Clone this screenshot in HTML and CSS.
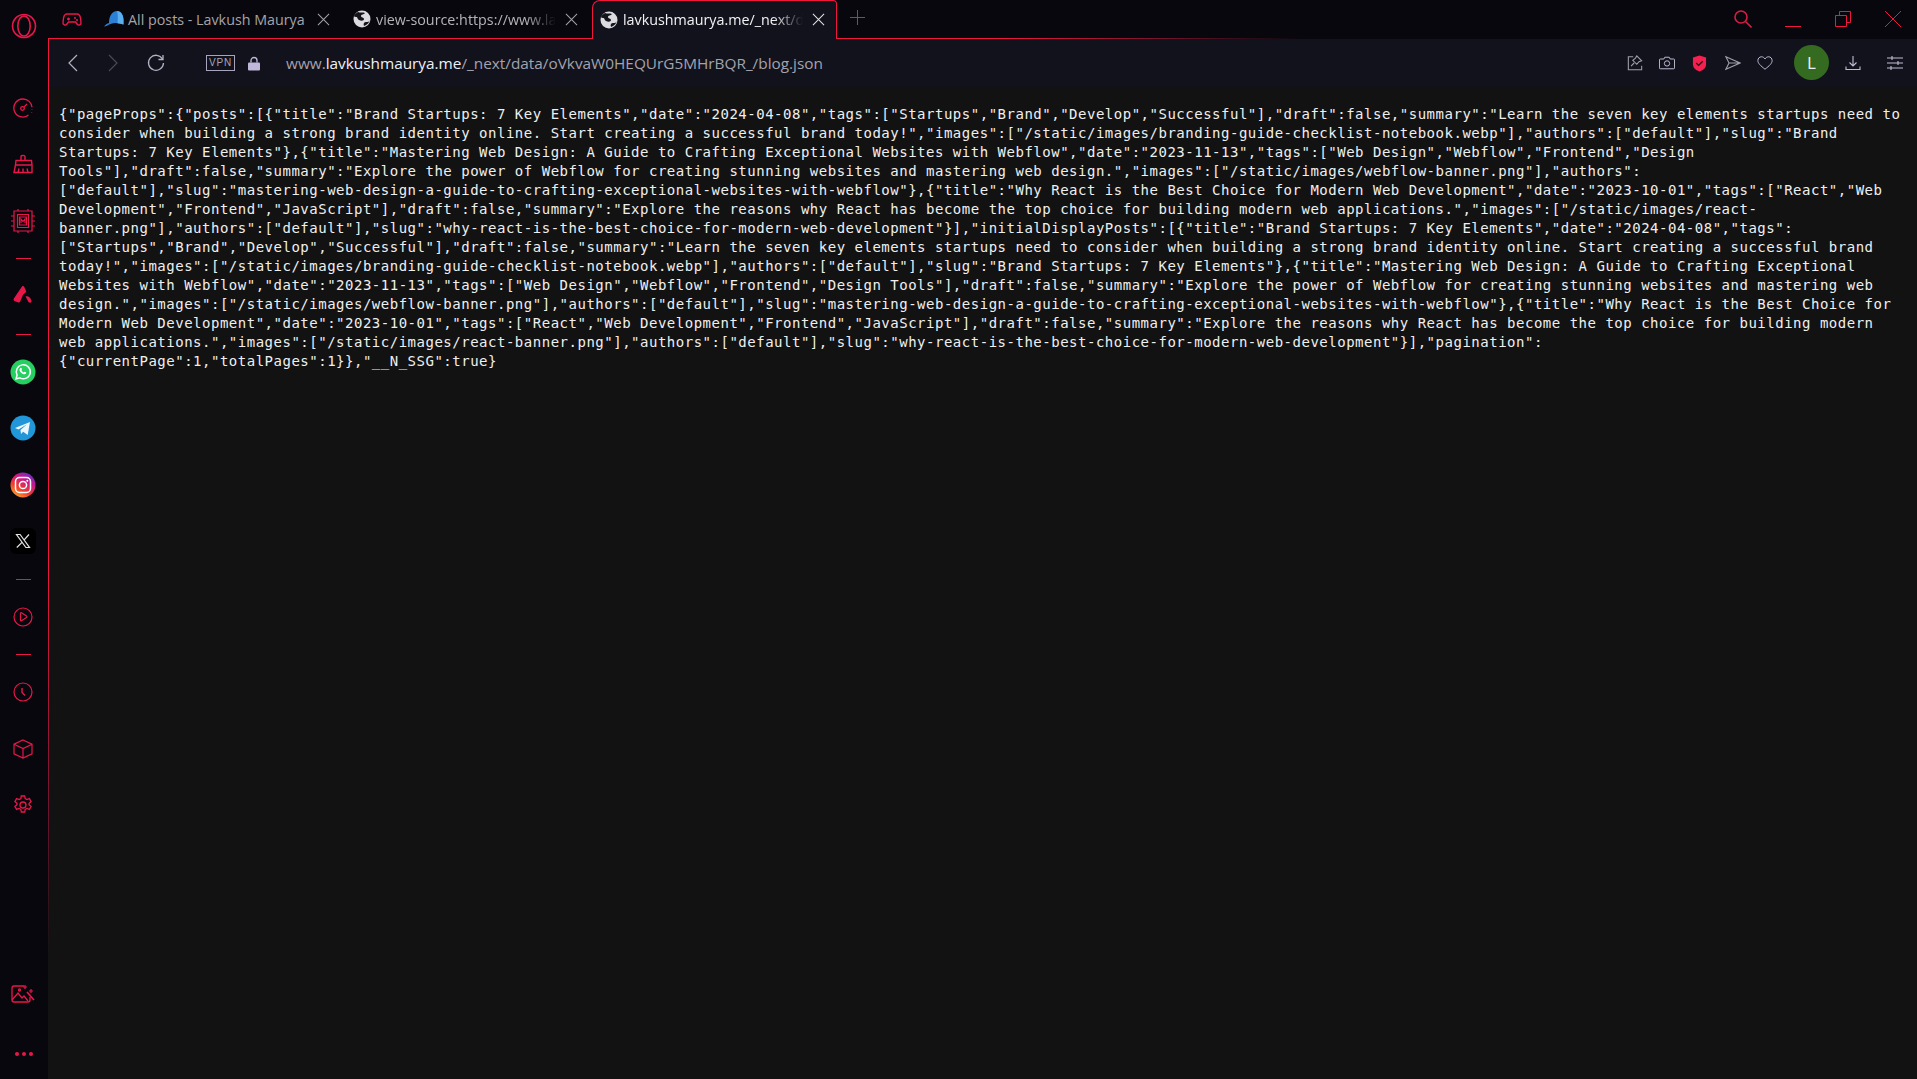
FILE: index.html
```html
<!DOCTYPE html>
<html lang="en">
<head>
<meta charset="utf-8">
<title>lavkushmaurya.me/_next/data</title>
<link rel="stylesheet" href="styles.css">
</head>
<body>
<div class="app">
  <aside class="sidebar">
    <div class="logo-slot">
      <svg class="ic-logo" viewBox="0 0 26 26" fill="none" stroke="currentColor" stroke-width="1.6"><circle cx="13" cy="13" r="11.5"/><ellipse cx="13" cy="13" rx="6.2" ry="10"/></svg>
    </div>
    <div class="side-items">
      <div class="slot"><svg class="ic" viewBox="0 0 20 20" fill="none" stroke="currentColor" stroke-width="1.3"><path d="M15.5 17A9 9 0 1 1 10 1c4.7 0 8.6 3.6 9 8.2"/><path d="M19 11.5v.5M18.6 14v.5"/><circle cx="9.5" cy="10.5" r="1.8"/><path d="M11 9l3-3"/></svg></div>
      <div class="slot"><svg class="ic" viewBox="0 0 20 20" fill="none" stroke="currentColor" stroke-width="1.4"><path d="M8 6V2.500c0-1.500 4-1.500 4 0V6M3 6.500h15.500l.5 4.500v7.500H1l1.500-7.500zM3 11h16M5 18.500l1-4M10 18.500v-4M15 18.500l-1-4"/></svg></div>
      <div class="slot"><svg class="ic ic-lg" viewBox="0 0 24 24" fill="none" stroke="currentColor" stroke-width="1.2"><path d="M3 2h18v20H3zM6.500 5.500h11v13h-11zM8.500 8h7v8h-7z"/><path d="M7 0v2M17 0v2M7 22v2M17 22v2M0 7h3M0 12h3M0 17h3M21 7h3M21 12h3M21 17h3"/><path d="M10 14v-4l2 2.500 2-2.500v4"/></svg></div>
      <div class="rule"></div>
      <div class="slot"><svg class="ic" viewBox="0 0 20 20" fill="currentColor"><path d="M9 .5c1-.7 1.800-.4 2.300.6l2 4.700-3.300 3-2.800 6.600c-.5 1-1.500 1.300-2.400.9L1.500 15c-.9-.5-1.200-1.400-.8-2.300z"/><path d="M12.500 10.500c2-1 4.500 0 5.800 3.500.4 1 .2 2-.5 2.500-.8.500-1.700.2-2.300-.4z"/></svg></div>
      <div class="rule"></div>
      <div class="slot"><svg class="ic-app" viewBox="0 0 26 26"><circle cx="13" cy="13" r="12.500" fill="#25cf60"/><path d="M6 20l1.100-4a7 7 0 1 1 2.800 2.900z" fill="none" stroke="#fff" stroke-width="1.500"/><path d="M10 9.500c.8-1 1.400-.8 1.700 0 .3.900.2 1-.3 1.700.5 1 1.200 1.700 2.300 2.200.7-.8 1-.8 1.800-.3 1 .5 1 1 .3 1.700-1 .9-3 .4-4.500-.9-1.500-1.300-2.500-3.200-1.300-4.400z" fill="#fff"/></svg></div>
      <div class="slot"><svg class="ic-app" viewBox="0 0 26 26"><circle cx="13" cy="13" r="12.500" fill="#2196d8"/><path d="M5 13l15-6-2.300 13-4.500-3.200-2.200 2.100-.5-3.800 6.500-5.800-8.500 5.200z" fill="#eef6fb"/></svg></div>
      <div class="slot"><svg class="ic-app" viewBox="0 0 26 26"><defs><linearGradient id="ig" x1="0.15" y1="1" x2="0.8" y2="0"><stop offset="0" stop-color="#fdb42c"/><stop offset="0.35" stop-color="#f0402c"/><stop offset="0.7" stop-color="#c6188f"/><stop offset="1" stop-color="#5a35c8"/></linearGradient></defs><circle cx="13" cy="13" r="12.500" fill="url(#ig)"/><rect x="5.500" y="5.500" width="15" height="15" rx="4" fill="none" stroke="#fff" stroke-width="1.500"/><circle cx="13" cy="13" r="3.600" fill="none" stroke="#fff" stroke-width="1.500"/><circle cx="17.300" cy="8.700" r="1" fill="#fff"/></svg></div>
      <div class="slot"><svg class="ic-app" viewBox="0 0 26 26"><rect width="26" height="26" rx="6" fill="#000"/><path d="M6.500 6.500h3.600l9.400 13h-3.600zM19 6.500l-5.300 5.900M12 14.300l-5.200 5.200" fill="none" stroke="#e6e6e6" stroke-width="1.200"/></svg></div>
      <div class="rule"></div>
      <div class="slot"><svg class="ic" viewBox="0 0 20 20" fill="none" stroke="currentColor" stroke-width="1.2"><circle cx="10" cy="10" r="9"/><path d="M7.500 6.300c0-.6.400-.8 1-.5l5 3.300c.6.400.6 1 0 1.400l-5 3.200c-.6.400-1 .1-1-.5z"/></svg></div>
      <div class="rule"></div>
      <div class="slot"><svg class="ic" viewBox="0 0 20 20" fill="none" stroke="currentColor" stroke-width="1.2"><circle cx="10" cy="10" r="9"/><path d="M9 6v4.500l3 3" stroke-width="1.400"/></svg></div>
      <div class="slot"><svg class="ic" viewBox="0 0 20 20" fill="none" stroke="currentColor" stroke-width="1.2"><path d="M10 1l9 4.200v9.600L10 19l-9-4.200V5.200zM1 5.200L10 9.500l9-4.300M10 9.500V19"/></svg></div>
      <div class="slot"><svg class="ic" viewBox="0 0 20 20" fill="none" stroke="currentColor" stroke-width="1.3"><circle cx="10" cy="10" r="3"/><path d="M8.300 1h3.400l.5 2.600 1.700.9 2.500-.9 1.700 3-2 1.700v1.400l2 1.700-1.700 3-2.500-.9-1.700.9-.5 2.600H8.300l-.5-2.600-1.700-.9-2.500.9-1.700-3 2-1.700V8.300l-2-1.700 1.700-3 2.500.9 1.700-.9z"/></svg></div>
    </div>
    <div class="side-bottom">
      <div class="slot"><svg class="ic-pic" viewBox="0 0 24 20" fill="none" stroke="currentColor" stroke-width="1.3"><path d="M13 2H3a2 2 0 0 0-2 2v12a2 2 0 0 0 2 2h14a2 2 0 0 0 2-2v-3"/><path d="M1 16l6-7 4 5 2-2 4 5"/><circle cx="8.500" cy="6" r="1"/><path d="M16 8l7 8" stroke-width="1.600"/><path d="M14 1v4M12 3h4M20 5v4M18 7h4" stroke-width="1.200"/></svg></div>
      <div class="dots"><i></i><i></i><i></i></div>
    </div>
  </aside>
  <div class="main">
    <header class="tabstrip">
      <svg class="ic-game" viewBox="0 0 20 16" fill="none" stroke="currentColor" stroke-width="1.4"><path d="M5 2h10c2 0 3 1.500 3.500 4l.5 4.500c.2 2.500-2.500 3.500-4 1.500l-1.500-2H6.500L5 12c-1.500 2-4.200 1-4-1.500L1.500 6C2 3.500 3 2 5 2z"/><path d="M5 7h3M6.500 5.500v3"/><circle cx="13" cy="6" r=".4"/><circle cx="15" cy="8" r=".4"/></svg>
      <div class="tab tab-first">
        <svg class="fav" viewBox="0 0 20 18"><path d="M0 16.500c1.500-2 3-3 5-3.500C5 6 8 1 13 1c4 0 6.500 4 6.500 9v4.500c-4.500-1.500-9-2-13-.5-2.500 1-4.500 2.500-6.500 2.500z" fill="#2b7fd4"/><path d="M13 1c4 0 6.500 4 6.500 9v4.500c-2-.6-4-1-6-1.200C14 8 14 4 13 1z" fill="#5ab0ef"/></svg>
        <span class="tab-title">All posts - Lavkush Maurya</span>
        <svg class="close" viewBox="0 0 14 14"><path d="M1 1l12 12M13 1L1 13"/></svg>
      </div>
      <div class="tab tab-second">
        <svg class="fav fav-globe" viewBox="0 0 18 18"><circle cx="9" cy="9" r="8.500" fill="#dcdce0"/><path d="M5 2c2 1 5 0 7 1-1 2-4 1-4 3s3 1 3 3-3 2-5 1-1-3-3-3-2-1-2-1c0-1 2-3 4-4zM17 10c-1 2-2 2-4 2s-3 2-2 4c3-1 5-3 6-6z" fill="#14141c"/></svg>
        <span class="tab-title tab-fade">view-source:https://www.la</span>
        <svg class="close" viewBox="0 0 14 14"><path d="M1 1l12 12M13 1L1 13"/></svg>
      </div>
      <div class="tab tab-active">
        <svg class="fav fav-globe" viewBox="0 0 18 18"><circle cx="9" cy="9" r="8.500" fill="#dcdce0"/><path d="M5 2c2 1 5 0 7 1-1 2-4 1-4 3s3 1 3 3-3 2-5 1-1-3-3-3-2-1-2-1c0-1 2-3 4-4zM17 10c-1 2-2 2-4 2s-3 2-2 4c3-1 5-3 6-6z" fill="#14141c"/></svg>
        <span class="tab-title tab-fade tab-title-active">lavkushmaurya.me/_next/da</span>
        <svg class="close close-active" viewBox="0 0 14 14"><path d="M1 1l12 12M13 1L1 13"/></svg>
      </div>
      <svg class="plus" viewBox="0 0 15 15"><path d="M7.500 0v15M0 7.500h15"/></svg>
      <div class="winbtns">
        <svg class="win win-search" viewBox="0 0 18 18" fill="none" stroke="currentColor" stroke-width="1.600"><circle cx="7" cy="7" r="6"/><path d="M11.500 11.500l6 6"/></svg>
        <svg class="win win-min" viewBox="0 0 16 16" fill="none" stroke="currentColor" stroke-width="1"><path d="M0 15.500h16"/></svg>
        <svg class="win win-max" viewBox="0 0 16 16" fill="none" stroke="currentColor" stroke-width="1"><path d="M.5 4.500h11v11H.5zM4.500 4.500v-4h11v11h-4"/></svg>
        <svg class="win win-close" viewBox="0 0 16 16" fill="none" stroke="currentColor" stroke-width="1"><path d="M0 0l16 16M16 0L0 16"/></svg>
      </div>
    </header>
    <div class="content">
      <nav class="toolbar">
        <svg class="nav-ic nav-back" viewBox="0 0 12 18"><path d="M10 1L2 9l8 8"/></svg>
        <svg class="nav-ic nav-fwd" viewBox="0 0 12 18"><path d="M2 1l8 8-8 8"/></svg>
        <svg class="nav-ic nav-reload" viewBox="0 0 18 18"><path d="M15.500 5A7.500 7.500 0 1 0 16.500 9"/><path d="M16 1v4.500h-4.500"/></svg>
        <span class="vpn">VPN</span>
        <svg class="lock" viewBox="0 0 12 14"><path d="M3 6V4a3 3 0 0 1 6 0v2" fill="none" stroke="#c0b8da" stroke-width="1.300"/><rect y="6" width="12" height="8" rx="1" fill="#c0b8da"/></svg>
        <div class="url"><span class="url-dim">www.</span><span class="url-host">lavkushmaurya.me</span><span class="url-dim">/_next/data/oVkvaW0HEQUrG5MHrBQR_/blog.json</span></div>
        <div class="tools">
          <svg class="tool" viewBox="0 0 18 18" fill="none" stroke="#a0a0a8" stroke-width="1.200"><path d="M7 2H1.500v14.500h15V12"/><path d="M11 1l5.500 5.500-3 1-2.500 3-4.500-4.500 3-2.500zM8 9l-3.500 3.500"/></svg>
          <svg class="tool" viewBox="0 0 18 16" fill="none" stroke="#c0bcd4" stroke-width="1.100"><path d="M1.500 3.500h4l1-2h5l1 2h4a1 1 0 0 1 1 1v9a1 1 0 0 1-1 1h-15a1 1 0 0 1-1-1v-9a1 1 0 0 1 1-1z"/><circle cx="9" cy="8.500" r="3"/></svg>
          <svg class="tool tool-shield" viewBox="0 0 16 18"><path d="M8 .5l7 2.200V10c0 4-4 6.500-7 7.500C5 16.500 1 14 1 10V2.700z" fill="#f5204f"/><path d="M4.500 8.500l2.500 2.500 4.500-4.500" fill="none" stroke="#14141c" stroke-width="1.500"/></svg>
          <svg class="tool tool-send" viewBox="0 0 18 16" fill="none" stroke="#a0a0a8" stroke-width="1.200"><path d="M1 1l16 7-16 7 3.500-7zM4.500 8H17"/></svg>
          <svg class="tool tool-heart" viewBox="0 0 18 16" fill="none" stroke="#c0bcd4" stroke-width="1.100"><path d="M9 15C4 11 1 8.500 1 5.200 1 2.800 2.800 1 5 1c1.700 0 3 .9 4 2.500C10 1.900 11.300 1 13 1c2.200 0 4 1.800 4 4.200C17 8.500 14 11 9 15z"/></svg>
          <span class="avatar">L</span>
          <svg class="tool tool-dl" viewBox="0 0 16 16" fill="none" stroke="#c0bcd4" stroke-width="1.100"><path d="M8 1v10M4.500 7.500L8 11l3.500-3.500M1 11.500v3h14v-3"/></svg>
          <svg class="tool tool-eq" viewBox="0 0 16 14" fill="none" stroke="#c0bcd4" stroke-width="1.100"><path d="M0 2h16M0 7h16M0 12h16M5 0v4M11 5v4M4 10v4"/></svg>
        </div>
      </nav>
      <main class="page"><pre class="json">{"pageProps":{"posts":[{"title":"Brand Startups: 7 Key Elements","date":"2024-04-08","tags":["Startups","Brand","Develop","Successful"],"draft":false,"summary":"Learn the seven key elements startups need to
consider when building a strong brand identity online. Start creating a successful brand today!","images":["/static/images/branding-guide-checklist-notebook.webp"],"authors":["default"],"slug":"Brand
Startups: 7 Key Elements"},{"title":"Mastering Web Design: A Guide to Crafting Exceptional Websites with Webflow","date":"2023-11-13","tags":["Web Design","Webflow","Frontend","Design
Tools"],"draft":false,"summary":"Explore the power of Webflow for creating stunning websites and mastering web design.","images":["/static/images/webflow-banner.png"],"authors":
["default"],"slug":"mastering-web-design-a-guide-to-crafting-exceptional-websites-with-webflow"},{"title":"Why React is the Best Choice for Modern Web Development","date":"2023-10-01","tags":["React","Web
Development","Frontend","JavaScript"],"draft":false,"summary":"Explore the reasons why React has become the top choice for building modern web applications.","images":["/static/images/react-
banner.png"],"authors":["default"],"slug":"why-react-is-the-best-choice-for-modern-web-development"}],"initialDisplayPosts":[{"title":"Brand Startups: 7 Key Elements","date":"2024-04-08","tags":
["Startups","Brand","Develop","Successful"],"draft":false,"summary":"Learn the seven key elements startups need to consider when building a strong brand identity online. Start creating a successful brand
today!","images":["/static/images/branding-guide-checklist-notebook.webp"],"authors":["default"],"slug":"Brand Startups: 7 Key Elements"},{"title":"Mastering Web Design: A Guide to Crafting Exceptional
Websites with Webflow","date":"2023-11-13","tags":["Web Design","Webflow","Frontend","Design Tools"],"draft":false,"summary":"Explore the power of Webflow for creating stunning websites and mastering web
design.","images":["/static/images/webflow-banner.png"],"authors":["default"],"slug":"mastering-web-design-a-guide-to-crafting-exceptional-websites-with-webflow"},{"title":"Why React is the Best Choice for
Modern Web Development","date":"2023-10-01","tags":["React","Web Development","Frontend","JavaScript"],"draft":false,"summary":"Explore the reasons why React has become the top choice for building modern
web applications.","images":["/static/images/react-banner.png"],"authors":["default"],"slug":"why-react-is-the-best-choice-for-modern-web-development"}],"pagination":
{"currentPage":1,"totalPages":1}},"__N_SSG":true}</pre></main>
    </div>
  </div>
</div>
</body>
</html>
```
FILE: styles.css
```css
* { box-sizing: border-box; }
html, body { margin: 0; height: 100%; overflow: hidden; background: #08070d; }
.app { display: flex; height: 1079px; width: 1917px; font-family: "Open Sans", "Noto Sans", sans-serif; }

.sidebar { width: 48px; flex: none; display: flex; flex-direction: column; align-items: center; color: #e8174a; }
.logo-slot { height: 50px; display: flex; align-items: center; justify-content: center; width: 100%; }
.ic-logo { width: 26px; height: 26px; margin-top: 1px; }
.side-items { display: flex; flex-direction: column; align-items: center; width: 100%; padding-top: 29.500px; }
.slot { height: 56.500px; width: 100%; display: flex; align-items: center; justify-content: center; flex: none; padding-right: 2.500px; }
.rule { width: 15px; height: 1px; background: #e8174a; margin: 9px 1px 9px 0; flex: none; }
.ic { width: 20px; height: 20px; }
.ic-lg { width: 24px; height: 24px; }
.ic-app { width: 26px; height: 26px; }
.ic-pic { width: 24px; height: 20px; }
.side-bottom { margin-top: auto; width: 100%; display: flex; flex-direction: column; align-items: center; padding-bottom: 6px; }
.dots { display: flex; gap: 3px; height: 26px; padding-top: 5px; margin-top: 25px; }
.dots i { width: 4px; height: 4px; border-radius: 50%; background: #e8174a; }

.main { flex: 1; min-width: 0; display: flex; flex-direction: column; }
.tabstrip { height: 39px; flex: none; display: flex; align-items: flex-start; position: relative; background: #08070d; }
.tabstrip::after { content: ""; position: absolute; left: 0; right: 0; bottom: 0; height: 1px; background: linear-gradient(90deg, #f0173f 0, #f0173f 51%, #6e1428 60%, rgba(240,23,63,0) 67%); }
.ic-game { width: 20px; height: 16px; color: #e8174a; margin: 12px 0 0 14px; flex: none; }
.tab { height: 39px; display: flex; align-items: center; flex: none; position: relative; padding-bottom: 1px; }
.tab-first { margin-left: 22px; width: 249px; }
.tab-second { width: 240px; }
.tab-second .close { margin-right: 15px; }
.tab-active { width: 245px; background: #12121c; border: 1px solid #f0173f; border-bottom: 0; border-radius: 8px 4px 0 0; z-index: 1; padding-left: 7px; margin-left: -1px; }
.fav { width: 20px; height: 18px; flex: none; margin-right: 4px; }
.fav-globe { width: 18px; height: 18px; margin-right: 5px; }
.tab-title { font-size: 14.300px; color: #a4a4a8; white-space: nowrap; }
.tab-fade { color: #b4b4b8; -webkit-mask-image: linear-gradient(90deg, #000 150px, transparent 180px); mask-image: linear-gradient(90deg, #000 150px, transparent 180px); }
.tab-title-active { color: #f2f2f4; }
.close { width: 13px; height: 13px; margin-left: auto; margin-right: 23px; flex: none; fill: none; stroke: #a4a4a8; stroke-width: 1.100; }
.close-active { stroke: #e4e4e8; margin-right: 11px; }
.plus { width: 15px; height: 15px; stroke: #f0173f; stroke-width: 1; margin: 10px 0 0 13px; flex: none; fill: none; }
.winbtns { margin-left: auto; display: flex; align-items: flex-start; color: #f0173f; padding: 10px 16px 0 0; }
.win { flex: none; display: block; }
.win-search { width: 18px; height: 18px; color: #d81c42; }
.win-min { width: 16px; height: 16px; margin-left: 33px; margin-top: 1px; }
.win-max { width: 16px; height: 16px; margin-left: 34px; margin-top: 1px; }
.win-close { width: 16px; height: 16px; margin-left: 34px; margin-top: 1px; }

.content { flex: 1; min-height: 0; display: flex; flex-direction: column; border-left: 1px solid; border-image: linear-gradient(#f0173f 0, #f0173f 50%, #7a1530 72%, #121212 88%) 1; }
.toolbar { height: 48px; flex: none; background: #12121c; display: flex; align-items: center; padding-left: 18px; }
.nav-ic { flex: none; fill: none; stroke-width: 1.200; }
.nav-back { width: 12px; height: 18px; stroke: #b4b0c4; }
.nav-fwd { width: 12px; height: 18px; stroke: #4a4a54; margin-left: 28px; }
.nav-reload { width: 18px; height: 18px; stroke: #b4b0c4; margin-left: 28px; stroke-width: 1.300; }
.vpn { width: 29px; height: 16px; border: 1px solid #a8a4bc; color: #a8a4bc; font-size: 10px; letter-spacing: 0.800px; line-height: 14px; text-align: center; margin-left: 41px; flex: none; font-family: "Liberation Sans", sans-serif; }
.lock { width: 12px; height: 15px; margin-left: 13px; flex: none; }
.url { margin-left: 26px; font-size: 15.350px; white-space: nowrap; }
.url-dim { color: #a3a3ad; }
.url-host { color: #f0f0f4; }
.tools { margin-left: auto; display: flex; align-items: center; padding-right: 14px; }
.tool { flex: none; width: 16px; height: 16px; margin-left: 16px; }
.tool-shield { width: 15px; height: 17px; margin-left: 17px; }
.tool-send { margin-left: 18px; }
.tool-heart { margin-left: 16px; }
.avatar { width: 35px; height: 35px; border-radius: 50%; background: #346b20; color: #f0f0f0; font-size: 17px; display: flex; align-items: center; justify-content: center; margin: -1px 0 0 21px; flex: none; }
.tool-dl { margin-left: 16px; }
.tool-eq { margin-left: 26px; }

.page { flex: 1; background: #121212; padding: 18px 0 0 10px; min-height: 0; }
.json { margin: 0; font-family: "DejaVu Sans Mono", monospace; font-size: 14px; letter-spacing: 0.510px; line-height: 19px; color: #efefef; white-space: pre; }
```
